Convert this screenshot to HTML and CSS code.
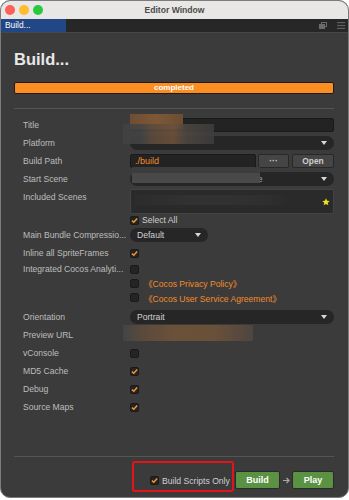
FILE: index.html
```html
<!DOCTYPE html>
<html lang="en">
<head>
  <meta charset="UTF-8">
  <title>Editor Window</title>
  <link rel="stylesheet" href="styles.css">
</head>
<body>
  <div class="window">
    <div class="titlebar">
      <span class="light red"></span>
      <span class="light yellow"></span>
      <span class="light green"></span>
      <div class="title">Editor Window</div>
    </div>

    <div class="tabbar">
      <div class="tab">Build...</div>
      <div class="tab-icons">
        <svg width="8" height="7" viewBox="0 0 8 7"><rect x="2.5" y="0.5" width="5" height="4" fill="none" stroke="#6a6a6a"/><rect x="0.5" y="2.5" width="5" height="4" fill="#6a6a6a" stroke="#6a6a6a"/></svg>
        <svg width="8" height="7" viewBox="0 0 8 7"><rect x="0" y="0" width="8" height="1.2" fill="#5e5e5e"/><rect x="0" y="2.9" width="8" height="1.2" fill="#5e5e5e"/><rect x="0" y="5.8" width="8" height="1.2" fill="#5e5e5e"/></svg>
      </div>
    </div>

    <div class="panel">
      <h1>Build...</h1>
      <div class="progress">completed</div>
      <div class="sep"></div>

      <div class="row">
        <label>Title</label>
        <div class="input"></div>
      </div>
      <div class="row">
        <label>Platform</label>
        <div class="select wide"><span></span><i class="arrow"></i></div>
      </div>
      <div class="row">
        <label>Build Path</label>
        <div class="input path orange">./build</div>
        <button class="btn dots">···</button>
        <button class="btn open">Open</button>
      </div>
      <div class="row">
        <label>Start Scene</label>
        <div class="select wide"><span class="scene">re</span><i class="arrow"></i></div>
      </div>
      <div class="row top">
        <label>Included Scenes</label>
        <div class="scenes">
          <svg class="star" width="8" height="8" viewBox="0 0 10 10"><polygon points="5,0.3 6.3,3.4 9.7,3.6 7.1,5.8 7.9,9.2 5,7.4 2.1,9.2 2.9,5.8 0.3,3.6 3.7,3.4" fill="#f4e21a"/></svg>
        </div>
      </div>
      <div class="row small">
        <label></label>
        <span class="check on"><svg viewBox="0 0 9 9"><path d="M2 4.6 L3.8 6.3 L7.2 2.6" fill="none" stroke="#f4952b" stroke-width="1.5"/></svg></span>
        <span class="text">Select All</span>
      </div>
      <div class="row">
        <label>Main Bundle Compressio...</label>
        <div class="select short"><span>Default</span><i class="arrow"></i></div>
      </div>
      <div class="row">
        <label>Inline all SpriteFrames</label>
        <span class="check on"><svg viewBox="0 0 9 9"><path d="M2 4.6 L3.8 6.3 L7.2 2.6" fill="none" stroke="#f4952b" stroke-width="1.5"/></svg></span>
      </div>
      <div class="row mid">
        <label>Integrated Cocos Analyti...</label>
        <span class="check"></span>
      </div>
      <div class="row mid">
        <label></label>
        <span class="check"></span>
        <span class="link">《Cocos Privacy Policy》</span>
      </div>
      <div class="row mid last">
        <label></label>
        <span class="check"></span>
        <span class="link">《Cocos User Service Agreement》</span>
      </div>
      <div class="row">
        <label>Orientation</label>
        <div class="select wide"><span>Portrait</span><i class="arrow"></i></div>
      </div>
      <div class="row">
        <label>Preview URL</label>
      </div>
      <div class="row">
        <label>vConsole</label>
        <span class="check"></span>
      </div>
      <div class="row">
        <label>MD5 Cache</label>
        <span class="check on"><svg viewBox="0 0 9 9"><path d="M2 4.6 L3.8 6.3 L7.2 2.6" fill="none" stroke="#f4952b" stroke-width="1.5"/></svg></span>
      </div>
      <div class="row">
        <label>Debug</label>
        <span class="check on"><svg viewBox="0 0 9 9"><path d="M2 4.6 L3.8 6.3 L7.2 2.6" fill="none" stroke="#f4952b" stroke-width="1.5"/></svg></span>
      </div>
      <div class="row">
        <label>Source Maps</label>
        <span class="check on"><svg viewBox="0 0 9 9"><path d="M2 4.6 L3.8 6.3 L7.2 2.6" fill="none" stroke="#f4952b" stroke-width="1.5"/></svg></span>
      </div>

      <div class="spacer"></div>
      <div class="sep"></div>
      <div class="footer">
        <div class="marked">
          <span class="check on"><svg viewBox="0 0 9 9"><path d="M2 4.6 L3.8 6.3 L7.2 2.6" fill="none" stroke="#f4952b" stroke-width="1.5"/></svg></span>
          <span class="text">Build Scripts Only</span>
        </div>
        <button class="go">Build</button>
        <svg class="to" width="7" height="7" viewBox="0 0 7 7"><path d="M0 3.5 H6 M3.5 1 L6 3.5 L3.5 6" fill="none" stroke="#a8a8a8" stroke-width="1.2"/></svg>
        <button class="go play">Play</button>
      </div>

      <!-- blurred parts of the screenshot -->
      <div class="blur b-title"></div>
      <div class="blur b-title2"></div>
      <div class="blur b-scene"></div>
      <div class="blur b-list"></div>
      <div class="blur b-url"></div>
    </div>
  </div>
</body>
</html>
```

FILE: styles.css
```css
* {
  box-sizing: border-box;
}
body {
  margin: 0;
  background: #fff;
  font-family: "Liberation Sans", Arial, "Noto Sans CJK SC", sans-serif;
}
.window {
  width: 349px;
  height: 498px;
  border: 1px solid #7c7c7c;
  border-radius: 10px;
  overflow: hidden;
  display: flex;
  flex-direction: column;
  background: #3b3b3b;
}
.titlebar {
  height: 18px;
  background: #e9e7e5;
  display: flex;
  align-items: center;
  padding-left: 4px;
  position: relative;
}
.light {
  width: 10px;
  height: 10px;
  border-radius: 50%;
  margin-right: 4px;
}
.red { background: #fe5f57; }
.yellow { background: #febc2e; }
.green { background: #29c841; }
.title {
  position: absolute;
  left: 0;
  right: 0;
  text-align: center;
  font-size: 8.6px;
  font-weight: bold;
  color: #4b4b4b;
}
.tabbar {
  height: 14px;
  background: #272727;
  border-bottom: 1px solid #474747;
  display: flex;
  justify-content: space-between;
}
.tab {
  width: 66px;
  background: #224787;
  color: #fff;
  font-size: 8.4px;
  line-height: 13px;
  padding-left: 5px;
  margin-left: -1px;
}
.tab-icons {
  display: flex;
  align-items: center;
  gap: 10px;
  padding-right: 3px;
}
.panel {
  flex: 1;
  display: flex;
  flex-direction: column;
  padding: 0 14px 0 13px;
  position: relative;
}
h1 {
  margin: 16px 0 0 0;
  font-size: 16.5px;
  line-height: 20px;
  color: #e8e8e8;
}
.progress {
  margin-top: 13px;
  height: 12px;
  background: #fb8d21;
  border: 1px solid #1c1c1c;
  border-radius: 2px;
  color: #fff;
  font-size: 8px;
  font-weight: bold;
  line-height: 10px;
  text-align: center;
}
.sep {
  height: 1px;
  background: #555;
  margin-top: 14px;
}
.row {
  display: flex;
  align-items: center;
  height: 18px;
  padding-left: 9px;
  font-size: 8.6px;
  color: #bdbdbd;
}
.sep + .row {
  margin-top: 7px;
}
.row label {
  width: 107px;
  flex-shrink: 0;
  white-space: nowrap;
}
.row.top {
  align-items: flex-start;
  height: 27px;
  line-height: 18px;
}
.row.small {
  height: 12px;
  margin-top: -1px;
}
.row.mid {
  height: 14px;
}
.row.last {
  height: 15px;
  margin-bottom: 3px;
}
.input {
  flex: 1;
  height: 14px;
  background: #232323;
  border: 1px solid #1a1a1a;
  border-radius: 2px;
  line-height: 12px;
  padding-left: 4px;
}
.orange {
  color: #f7902a;
  font-size: 9px;
}
.path {
  flex: 0 0 126px;
}
.btn {
  height: 14px;
  background: #454545;
  border: 1px solid #282828;
  border-radius: 2px;
  color: #cfcfcf;
  font-family: inherit;
  font-size: 8.4px;
  font-weight: bold;
  padding: 0;
  margin-left: 2px;
}
.dots {
  width: 31px;
}
.open {
  width: 42px;
  margin-left: 3px;
}
.select {
  height: 14px;
  background: #262626;
  border-radius: 7px;
  display: flex;
  align-items: center;
  justify-content: space-between;
  padding: 0 7px;
  color: #d2d2d2;
}
.select.wide {
  flex: 1;
}
.select.short {
  width: 78px;
}
.arrow {
  width: 0;
  height: 0;
  border-left: 3px solid transparent;
  border-right: 3px solid transparent;
  border-top: 4px solid #d8d8d8;
}
.scene {
  padding-left: 118px;
  color: #a8a8a8;
}
.scenes {
  flex: 1;
  height: 25px;
  margin-top: 1px;
  background: #2a2a2a;
  border: 1px solid #444;
  border-radius: 2px;
  display: flex;
  align-items: center;
  justify-content: flex-end;
  padding-right: 3px;
}
.check {
  width: 9px;
  height: 9px;
  background: #242424;
  border: 1px solid #1a1a1a;
  border-radius: 2px;
  flex-shrink: 0;
  display: flex;
}
.check svg {
  width: 9px;
  height: 9px;
  margin: -1px;
}
.text {
  margin-left: 3px;
  color: #cfcfcf;
}
.link {
  margin-left: 5px;
  color: #f28b2a;
}
.spacer {
  flex: 1;
}
.footer {
  display: flex;
  justify-content: flex-end;
  align-items: flex-start;
  margin-top: 4px;
  height: 36px;
  font-size: 8.6px;
}
.marked {
  width: 102px;
  height: 31px;
  border: 2px solid #e5141b;
  border-radius: 3px;
  display: flex;
  align-items: center;
  padding: 8px 0 0 16px;
  margin-right: 1px;
}
.go {
  width: 45px;
  height: 18px;
  margin-top: 10px;
  background: #5a9143;
  border: 1px solid #2a2a2a;
  border-radius: 2px;
  color: #fff;
  font-family: inherit;
  font-size: 9px;
  font-weight: bold;
  padding: 0;
}
.go.play {
  width: 42px;
}
.to {
  margin: 16px 2px 0 3px;
}
.blur {
  position: absolute;
}
.b-title {
  left: 129px;
  top: 81px;
  width: 53px;
  height: 15px;
  background: linear-gradient(90deg, #6e4d33, #7d5837 50%, #6b4d35);
}
.b-title2 {
  left: 122px;
  top: 91px;
  width: 91px;
  height: 20px;
  background: linear-gradient(90deg, #414141 0, #444 20%, #5a4a3d 30%, #6c5039 55%, #4b4540 70%, #3d3d3d 100%);
  opacity: 0.9;
}
.b-scene {
  left: 131px;
  top: 134px;
  width: 128px;
  height: 16px;
  background: linear-gradient(180deg, #3d3d3d 0, #3d3d3d 40%, #484848 40%, #4a4a4a 100%);
}
.b-list {
  left: 134px;
  top: 162px;
  width: 150px;
  height: 10px;
  background: linear-gradient(90deg, #2c2c2c, #323232 40%, #303030 80%, #2b2b2b);
}
.b-url {
  left: 122px;
  top: 292px;
  width: 130px;
  height: 16px;
  background: linear-gradient(90deg, #444 0, #5a4a3d 15%, #6c5139 40%, #6b5039 70%, #4d4640 100%);
}
```
